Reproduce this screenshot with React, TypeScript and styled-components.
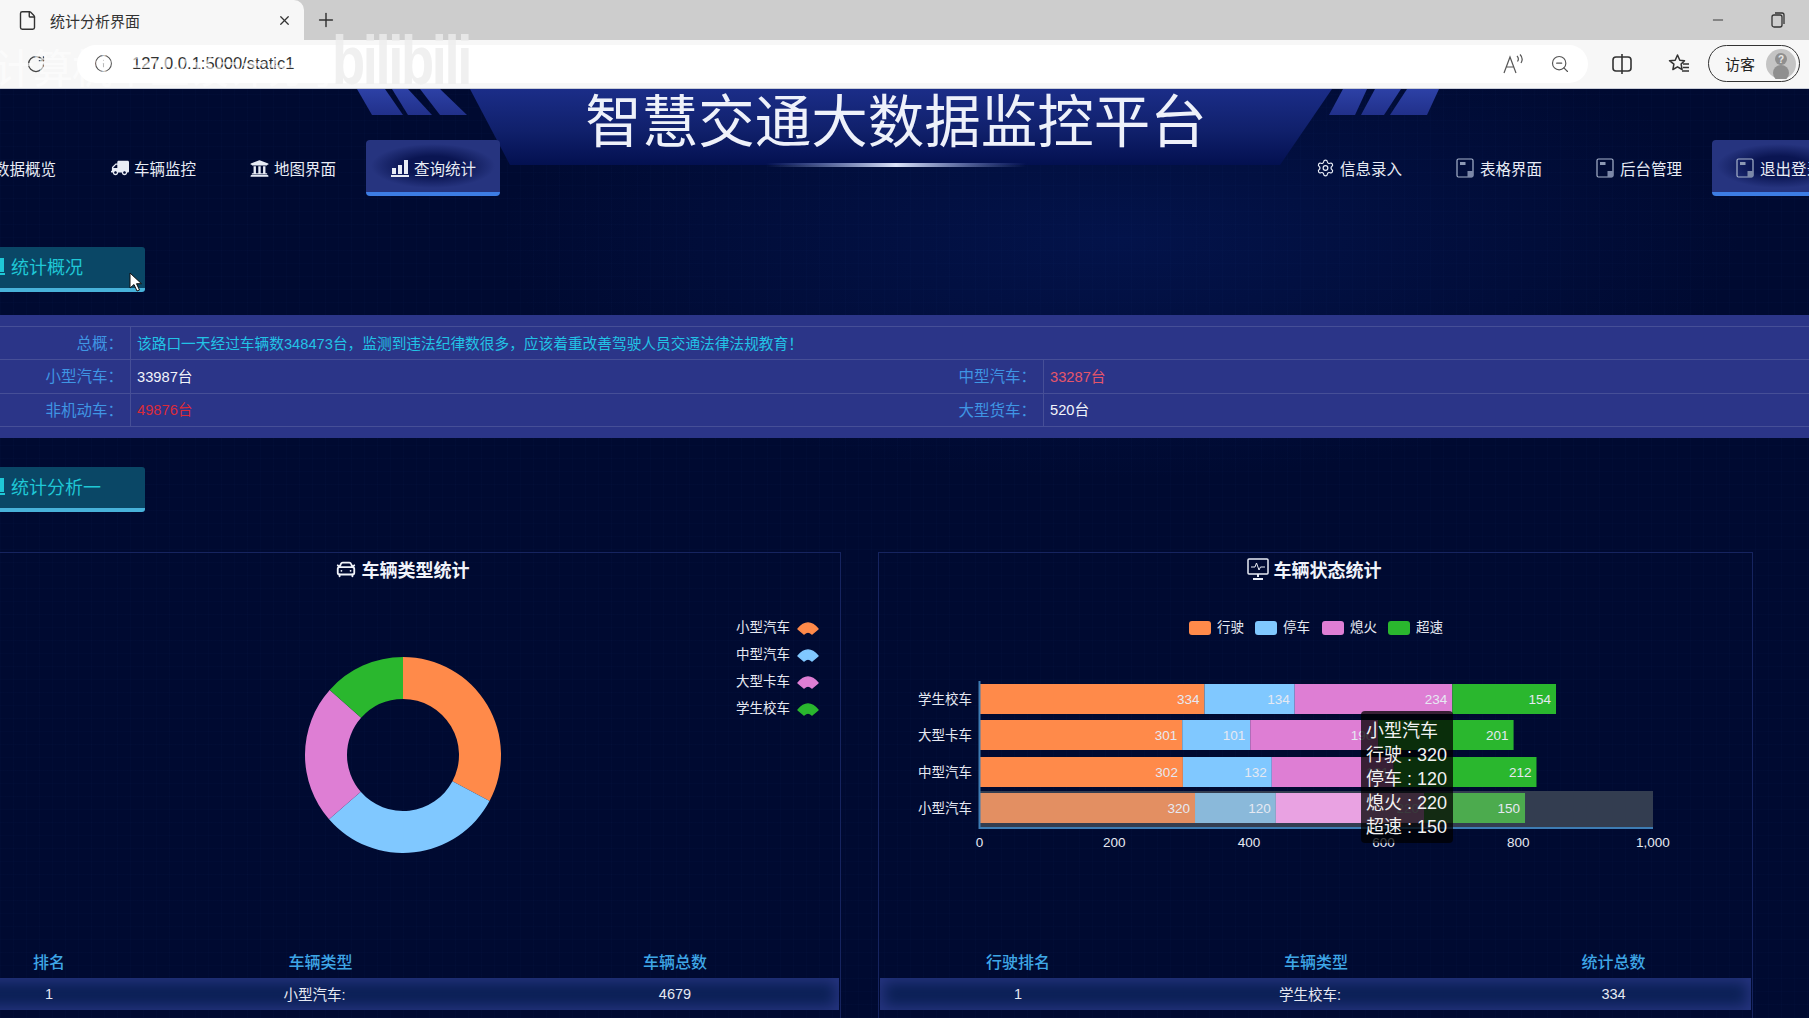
import React from "react";
import styled, { createGlobalStyle } from "styled-components";
import { CarFront, File, Info, Minus, Plus, RotateCw, Settings, X, ZoomOut } from "lucide-react";
import { FaTruck, FaUniversity } from "react-icons/fa";

const GlobalStyle = createGlobalStyle`
  html, body {
    margin: 0;
    padding: 0;
    overflow: hidden;
    background: #000b33;
  }
  * {
    box-sizing: border-box;
  }
  body {
    font-family: "Liberation Sans", "Noto Sans CJK SC", sans-serif;
  }
`;

const Window = styled.div`
  position: relative;
  width: 1809px;
  height: 1018px;
  overflow: hidden;
`;

const TabStrip = styled.div`
  display: flex;
  align-items: center;
  height: 40px;
  background: #cdcdcd;
  color: #333;
`;

const Tab = styled.div`
  display: flex;
  align-items: center;
  width: 304px;
  height: 40px;
  padding: 0 12px 0 17px;
  background: #f7f7f7;
  border-radius: 0 10px 0 0;
  font-size: 15px;
`;

const TabTitle = styled.span`
  flex: 1;
  margin-left: 12px;
`;

const NewTab = styled.div`
  display: flex;
  margin-left: 11px;
`;

const WindowControls = styled.div`
  display: flex;
  align-items: center;
  gap: 45px;
  margin-left: auto;
  padding-right: 24px;
`;

const Toolbar = styled.div`
  display: flex;
  align-items: center;
  height: 49px;
  padding: 0 9px 1px 26px;
  background: #f7f7f7;
  border-bottom: 1px solid #c9cdd8;
`;

const AddressBar = styled.div`
  display: flex;
  align-items: center;
  width: 1511px;
  height: 38px;
  margin-left: 31px;
  padding: 0 18px 0 17px;
  background: #fff;
  border-radius: 19px;
  color: #555;
`;

const Url = styled.span`
  margin-left: 19px;
  font-size: 16.5px;
  color: #333;
`;

const AddressTools = styled.div`
  display: flex;
  align-items: center;
  gap: 26px;
  margin-left: auto;
`;

const ToolbarIcons = styled.div`
  display: flex;
  align-items: center;
  gap: 36px;
  margin-left: 24px;
  color: #333;
`;

const GuestPill = styled.div`
  display: flex;
  align-items: center;
  justify-content: space-between;
  width: 92px;
  height: 37px;
  margin-left: auto;
  padding: 0 3px 0 16px;
  border: 1.5px solid #333;
  border-radius: 19px;
  font-size: 15px;
  color: #222;
`;

const Watermark = styled.div`
  position: absolute;
  left: 332px;
  top: 26px;
  font-size: 68px;
  line-height: 68px;
  font-weight: 700;
  letter-spacing: -3px;
  color: rgba(236, 236, 236, 0.8);
  transform: scaleX(0.8);
  transform-origin: left center;
  pointer-events: none;
`;

const GhostText = styled.div`
  position: absolute;
  left: -6px;
  top: 48px;
  font-size: 40px;
  line-height: 42px;
  letter-spacing: -1px;
  color: rgba(255, 255, 255, 0.62);
  pointer-events: none;
`;

const Page = styled.main`
  height: 929px;
  overflow: hidden;
  background-color: #000a31;
  background-image:
    repeating-linear-gradient(0deg, rgba(50, 100, 190, 0.025) 0 1px, transparent 1px 13px),
    repeating-linear-gradient(90deg, rgba(50, 100, 190, 0.025) 0 1px, transparent 1px 13px),
    radial-gradient(ellipse 620px 240px at 1120px 150px, #03134a, transparent);
`;

const Inner = styled.div`
  width: 1900px;
  margin-left: -54px;
`;

const Header = styled.header`
  position: relative;
  height: 107px;
`;

const HeaderArt = styled.svg`
  position: absolute;
  left: 0;
  top: 0;
`;

const Title = styled.h1`
  position: relative;
  height: 51px;
  margin: 0;
  font-size: 56.5px;
  line-height: 68px;
  font-weight: 400;
  text-align: center;
  color: #eef1fa;
`;

const Nav = styled.nav`
  position: relative;
  display: flex;
  justify-content: space-between;
  height: 56px;
`;

const NavGroup = styled.div`
  display: flex;
  gap: 6px;
`;

const NavItem = styled.a<{ $active?: boolean }>`
  display: flex;
  align-items: center;
  gap: 5px;
  width: 134px;
  height: 56px;
  padding-left: 24px;
  font-size: 15.5px;
  color: #e8ecf5;
  border-radius: 4px;
  ${(p) =>
    p.$active &&
    `
    padding-top: 4px;
    background: radial-gradient(ellipse 62px 22px at center, #0a1552 45%, #26347f 100%);
    border-bottom: 4px solid #3d7de4;
  `}
`;

const IconSlot = styled.span`
  display: flex;
  width: 19px;
  justify-content: center;
`;

const SectionBar = styled.div<{ $top: number }>`
  position: relative;
  display: flex;
  align-items: center;
  gap: 6px;
  width: 199px;
  height: 45px;
  margin-top: ${(p) => p.$top}px;
  padding: 0 0 3px 41px;
  background: #0a4766;
  border-bottom: 4px solid #48b2da;
  border-radius: 3px;
  font-size: 18px;
  color: #1fc8d6;
`;

const Pointer = styled.svg`
  position: absolute;
  left: 183px;
  top: 25px;
`;

const InfoPanel = styled.section`
  margin-top: 23px;
  padding: 11px 0;
  background: #2b3588;
`;

const InfoGrid = styled.div`
  display: grid;
  grid-template-columns: 184px 765px 148px 1fr;
  grid-auto-rows: 33.33px;
  border-bottom: 1px solid rgba(255, 255, 255, 0.13);
  font-size: 14.7px;
`;

const InfoLabel = styled.div`
  display: flex;
  align-items: center;
  justify-content: flex-end;
  padding: 0 7px 2px 0;
  border-top: 1px solid rgba(255, 255, 255, 0.13);
  font-size: 15.5px;
  color: #3f95e4;
`;

const InfoValue = styled.div<{ $tone: string; $wide?: boolean }>`
  display: flex;
  align-items: center;
  padding: 0 0 2px 6px;
  border-top: 1px solid rgba(255, 255, 255, 0.13);
  border-left: 1px solid rgba(255, 255, 255, 0.13);
  color: ${(p) => p.$tone};
  ${(p) => p.$wide && "grid-column: span 3;"}
`;

const Panels = styled.div`
  display: grid;
  grid-template-columns: 875px 875px;
  gap: 37px;
  margin: 40px 0 0 20px;
`;

const Panel = styled.section`
  height: 500px;
  border: 1px solid #16245f;
  border-bottom: none;
`;

const PanelTitle = styled.h2`
  display: flex;
  align-items: center;
  justify-content: center;
  gap: 5px;
  height: 37px;
  margin: 0;
  padding: 0 3px 5px 0;
  font-size: 18px;
  font-weight: 700;
  color: #f0f3fa;
`;

const ChartWrap = styled.div`
  position: relative;
  height: 355px;
`;

const ChartText = styled.text`
  font-size: 13.5px;
  fill: #e6e9f2;
`;

const Tooltip = styled.div`
  position: absolute;
  left: 482px;
  top: 121px;
  width: 92px;
  padding: 8px 0 4px 5px;
  background: rgba(0, 0, 0, 0.75);
  border-radius: 4px;
  font-size: 18px;
  line-height: 24px;
  color: #f2f2f2;
  white-space: nowrap;
`;

const TableHead = styled.div<{ $cols: string }>`
  display: grid;
  grid-template-columns: ${(p) => p.$cols};
  align-items: center;
  height: 33px;
  padding: 0 1px;
  font-size: 16px;
  font-weight: 500;
  text-align: center;
  color: #3ea6e6;
`;

const TableRow = styled.div<{ $cols: string }>`
  display: grid;
  grid-template-columns: ${(p) => p.$cols};
  align-items: center;
  height: 32px;
  margin: 0 1px;
  background: #0b2056;
  box-shadow: inset 0 0 14px 4px #26347f;
  font-size: 14.5px;
  text-align: center;
  color: #e6e9f2;
`;

const ORANGE = "#ff8a4a";
const BLUE = "#80c8ff";
const PINK = "#de7ed4";
const GREEN = "#2ab72e";
const SERIES = [ORANGE, BLUE, PINK, GREEN];
const FADED = ["#e38f62", "#8ab9da", "#e9a2e2", "#4cab4e"];

const polar = (cx: number, cy: number, r: number, deg: number) => {
  const a = ((deg - 90) * Math.PI) / 180;
  return [cx + r * Math.cos(a), cy + r * Math.sin(a)];
};

const ringSlice = (cx: number, cy: number, r0: number, r1: number, from: number, to: number) => {
  const [ax, ay] = polar(cx, cy, r1, from);
  const [bx, by] = polar(cx, cy, r1, to);
  const [ix, iy] = polar(cx, cy, r0, to);
  const [jx, jy] = polar(cx, cy, r0, from);
  const large = to - from > 180 ? 1 : 0;
  return `M${ax} ${ay}A${r1} ${r1} 0 ${large} 1 ${bx} ${by}L${ix} ${iy}A${r0} ${r0} 0 ${large} 0 ${jx} ${jy}Z`;
};

const DONUT = [
  { color: ORANGE, from: 0, to: 118 },
  { color: BLUE, from: 118, to: 229 },
  { color: PINK, from: 229, to: 311.6 },
  { color: GREEN, from: 311.6, to: 360 },
];

const DONUT_LEGEND = [
  { name: "小型汽车", color: ORANGE, y: 38 },
  { name: "中型汽车", color: BLUE, y: 65 },
  { name: "大型卡车", color: PINK, y: 92 },
  { name: "学生校车", color: GREEN, y: 119 },
];

const DonutChart = () => (
  <ChartWrap>
    <svg width="873" height="320">
      {DONUT.map((s) => (
        <path key={s.color} d={ringSlice(436, 165, 56, 98, s.from, s.to)} fill={s.color} />
      ))}
      {DONUT_LEGEND.map((l) => (
        <g key={l.name}>
          <ChartText x="769" y={l.y + 3.5}>
            {l.name}
          </ChartText>
          <path
            d={`M831 ${l.y + 1}Q841 ${l.y - 11} 851 ${l.y + 1}L845 ${l.y + 6}Q841 ${l.y + 2} 837 ${l.y + 6}Z`}
            fill={l.color}
            stroke={l.color}
            strokeWidth="1.5"
            strokeLinejoin="round"
          />
        </g>
      ))}
    </svg>
  </ChartWrap>
);

const BARS = [
  { name: "学生校车", y: 94, values: [334, 134, 234, 154] },
  { name: "大型卡车", y: 130, values: [301, 101, 190, 201] },
  { name: "中型汽车", y: 167, values: [302, 132, 181, 212] },
  { name: "小型汽车", y: 203, values: [320, 120, 220, 150], hover: true },
];

const STATE_LEGEND = [
  { name: "行驶", x: 310 },
  { name: "停车", x: 376 },
  { name: "熄火", x: 443 },
  { name: "超速", x: 509 },
];

const AXIS_X = 100.5;
const UNIT = 0.6735;

const BarChart = () => (
  <ChartWrap>
    <svg width="873" height="320">
      {STATE_LEGEND.map((l, i) => (
        <g key={l.name}>
          <rect x={l.x} y="31" width="22" height="14" rx="3" fill={SERIES[i]} />
          <ChartText x={l.x + 28} y="42">
            {l.name}
          </ChartText>
        </g>
      ))}
      <rect x={AXIS_X} y="201" width={1000 * UNIT} height="36" fill="#333d50" />
      {BARS.map((row) => {
        let acc = 0;
        return (
          <g key={row.name}>
            <ChartText x="93" y={row.y + 19.5} textAnchor="end">
              {row.name}
            </ChartText>
            {row.values.map((v, i) => {
              const x = AXIS_X + acc * UNIT;
              const w = v * UNIT;
              acc += v;
              return (
                <g key={i}>
                  <rect x={x} y={row.y} width={w} height="30" fill={row.hover ? FADED[i] : SERIES[i]} />
                  <ChartText x={x + w - 5} y={row.y + 19.5} textAnchor="end">
                    {v}
                  </ChartText>
                </g>
              );
            })}
          </g>
        );
      })}
      <path d={`M${AXIS_X} 91V238H${AXIS_X + 1000 * UNIT}`} fill="none" stroke="#3d7cb4" strokeWidth="2" />
      {[0, 200, 400, 600, 800, 1000].map((t) => (
        <ChartText key={t} x={AXIS_X + t * UNIT} y="257" textAnchor="middle">
          {t === 1000 ? "1,000" : t}
        </ChartText>
      ))}
    </svg>
    <Tooltip>
      小型汽车
      <br />
      行驶 : 320
      <br />
      停车 : 120
      <br />
      熄火 : 220
      <br />
      超速 : 150
    </Tooltip>
  </ChartWrap>
);

const BarsIcon = ({ size = 18 }: { size?: number }) => (
  <svg width={size} height={size} viewBox="0 0 18 18" fill="currentColor">
    <rect x="1" y="9" width="4" height="6" />
    <rect x="7" y="6" width="4" height="9" />
    <rect x="13" y="1" width="4" height="14" />
    <rect x="0" y="16" width="18" height="2" />
  </svg>
);

const PanelIcon = () => (
  <svg width="19" height="20" viewBox="0 0 19 20" fill="none">
    <rect x="1" y="1" width="16" height="18" rx="1.5" stroke="#a8b4cc" strokeWidth="1.2" />
    <rect x="4" y="4" width="5.500" height="3" fill="#8c98b4" />
    <rect x="11.500" y="13" width="5.500" height="6" fill="#7c88a8" />
  </svg>
);

const MonitorIcon = () => (
  <svg width="22" height="22" viewBox="0 0 22 22" fill="none" stroke="#e8ecf5" strokeWidth="1.5">
    <rect x="1" y="1" width="20" height="15" rx="1" />
    <path d="M4 9h4l1.5-4 2.5 7 1.5-3H18" strokeWidth="1" />
    <path d="M11 16v3M6 21h10" strokeWidth="2" />
  </svg>
);

const ReadAloudIcon = () => (
  <svg width="22" height="22" viewBox="0 0 22 22" fill="none" stroke="#555" strokeWidth="1.2">
    <path d="M2 20L8 4l6 16M4.500 14h7" />
    <path d="M15 3c1.500 1.500 1.500 4 .5 5.500M18 1.500c2.500 2.500 2.500 6 1 8.500" />
  </svg>
);

const SplitIcon = () => (
  <svg width="20" height="20" viewBox="0 0 20 20" fill="none" stroke="#333" strokeWidth="1.6">
    <rect x="1" y="3" width="18" height="14" rx="3" />
    <path d="M10 0v20" />
  </svg>
);

const FavoritesIcon = () => (
  <svg width="22" height="22" viewBox="0 0 22 22" fill="none" stroke="#333" strokeWidth="1.5">
    <path d="M9.500 2l2.300 5.200 4.700.5-3.400 3.400 1 5.400-4.600-2.700-4.600 2.700 1-5.400L1.500 7.700l5.700-.5z" strokeLinejoin="round" />
    <path d="M15 11h6M15 14.500h6M14 18h7" />
  </svg>
);

const RestoreIcon = () => (
  <svg width="14" height="16" viewBox="0 0 14 16" fill="none" stroke="#333" strokeWidth="1.3">
    <rect x="1" y="3" width="10" height="12" rx="2" />
    <path d="M4 1h7a2 2 0 0 1 2 2v9" />
  </svg>
);

const Avatar = () => (
  <svg width="30" height="30" viewBox="0 0 30 30">
    <circle cx="15" cy="15" r="15" fill="#c4c4c4" />
    <circle cx="15" cy="24" r="8" fill="#8f8f8f" />
    <circle cx="15" cy="10" r="6" fill="#8f8f8f" />
    <text x="15" y="14" fontSize="10" fontWeight="700" textAnchor="middle" fill="#e8e8e8">
      ?
    </text>
  </svg>
);

const HeaderBanner = () => (
  <HeaderArt width="1900" height="107" viewBox="0 0 1900 107">
    <defs>
      <linearGradient id="banner" x1="0" y1="0" x2="0" y2="1">
        <stop offset="0" stopColor="#1b2d88" />
        <stop offset="0.55" stopColor="#10206b" />
        <stop offset="1" stopColor="#031050" />
      </linearGradient>
      <linearGradient id="glow" x1="0" y1="0" x2="1" y2="0">
        <stop offset="0" stopColor="#8fa6f0" stopOpacity="0" />
        <stop offset="0.5" stopColor="#dbe3fa" />
        <stop offset="1" stopColor="#8fa6f0" stopOpacity="0" />
      </linearGradient>
      <linearGradient id="slash" x1="0" y1="0" x2="0" y2="1">
        <stop offset="0" stopColor="#2d41a6" />
        <stop offset="1" stopColor="#21308a" />
      </linearGradient>
    </defs>
    <path d="M524 0L564 76H1334L1386 0Z" fill="url(#banner)" />
    <rect x="820" y="74" width="260" height="4" fill="url(#glow)" />
    <g fill="url(#slash)">
      <path d="M411 0H439L457 26H426Z" />
      <path d="M446 0H462L486 26H462Z" />
      <path d="M474 0H494L521 26H494Z" />
      <path d="M1397 0H1421L1409 26H1383Z" />
      <path d="M1429 0H1455L1438 26H1415Z" />
      <path d="M1461 0H1493L1481 26H1444Z" />
    </g>
  </HeaderArt>
);

const LEFT_COLS = "162px 381px 1fr";
const RIGHT_COLS = "276px 320px 1fr";

const App: React.FC = () => (
  <Window>
    <GlobalStyle />
    <TabStrip>
      <Tab>
        <File size={21} strokeWidth={1.6} />
        <TabTitle>统计分析界面</TabTitle>
        <X size={15} />
      </Tab>
      <NewTab>
        <Plus size={22} strokeWidth={1.6} />
      </NewTab>
      <WindowControls>
        <Minus size={16} strokeWidth={1.4} />
        <RestoreIcon />
      </WindowControls>
    </TabStrip>
    <Toolbar>
      <RotateCw size={20} strokeWidth={1.5} color="#444" />
      <AddressBar>
        <Info size={19} strokeWidth={1.3} />
        <Url>127.0.0.1:5000/static1</Url>
        <AddressTools>
          <ReadAloudIcon />
          <ZoomOut size={20} strokeWidth={1.4} />
        </AddressTools>
      </AddressBar>
      <ToolbarIcons>
        <SplitIcon />
        <FavoritesIcon />
      </ToolbarIcons>
      <GuestPill>
        访客
        <Avatar />
      </GuestPill>
    </Toolbar>
    <Page>
      <Inner>
        <Header>
          <HeaderBanner />
          <Title>智慧交通大数据监控平台</Title>
          <Nav>
            <NavGroup>
              <NavItem>
                <IconSlot>
                  <BarsIcon />
                </IconSlot>
                数据概览
              </NavItem>
              <NavItem>
                <IconSlot>
                  <FaTruck size={18} style={{ transform: "scaleX(-1)" }} />
                </IconSlot>
                车辆监控
              </NavItem>
              <NavItem>
                <IconSlot>
                  <FaUniversity size={19} />
                </IconSlot>
                地图界面
              </NavItem>
              <NavItem $active>
                <IconSlot>
                  <BarsIcon />
                </IconSlot>
                查询统计
              </NavItem>
            </NavGroup>
            <NavGroup>
              <NavItem>
                <IconSlot>
                  <Settings size={20} strokeWidth={1.5} />
                </IconSlot>
                信息录入
              </NavItem>
              <NavItem>
                <IconSlot>
                  <PanelIcon />
                </IconSlot>
                表格界面
              </NavItem>
              <NavItem>
                <IconSlot>
                  <PanelIcon />
                </IconSlot>
                后台管理
              </NavItem>
              <NavItem $active>
                <IconSlot>
                  <PanelIcon />
                </IconSlot>
                退出登录
              </NavItem>
            </NavGroup>
          </Nav>
        </Header>
        <SectionBar $top={51}>
          <BarsIcon />
          统计概况
          <Pointer width="14" height="20" viewBox="0 0 14 20">
            <path d="M1 1v15l4-3.500 3 6.500 2.500-1-3-6.300h5z" fill="#fff" stroke="#111" strokeWidth="1" />
          </Pointer>
        </SectionBar>
        <InfoPanel>
          <InfoGrid>
            <InfoLabel>总概：</InfoLabel>
            <InfoValue $tone="#22c3e6" $wide>
              该路口一天经过车辆数348473台，监测到违法纪律数很多，应该着重改善驾驶人员交通法律法规教育！
            </InfoValue>
            <InfoLabel>小型汽车：</InfoLabel>
            <InfoValue $tone="#f2f4fa">33987台</InfoValue>
            <InfoLabel>中型汽车：</InfoLabel>
            <InfoValue $tone="#e6556a">33287台</InfoValue>
            <InfoLabel>非机动车：</InfoLabel>
            <InfoValue $tone="#d92b3a">49876台</InfoValue>
            <InfoLabel>大型货车：</InfoLabel>
            <InfoValue $tone="#f2f4fa">520台</InfoValue>
          </InfoGrid>
        </InfoPanel>
        <SectionBar $top={29}>
          <BarsIcon />
          统计分析一
        </SectionBar>
        <Panels>
          <Panel>
            <PanelTitle>
              <CarFront size={22} />
              车辆类型统计
            </PanelTitle>
            <DonutChart />
            <TableHead $cols={LEFT_COLS}>
              <span>排名</span>
              <span>车辆类型</span>
              <span>车辆总数</span>
            </TableHead>
            <TableRow $cols={LEFT_COLS}>
              <span>1</span>
              <span>小型汽车:&nbsp;&nbsp;&nbsp;</span>
              <span>4679</span>
            </TableRow>
          </Panel>
          <Panel>
            <PanelTitle>
              <MonitorIcon />
              车辆状态统计
            </PanelTitle>
            <BarChart />
            <TableHead $cols={RIGHT_COLS}>
              <span>行驶排名</span>
              <span>车辆类型</span>
              <span>统计总数</span>
            </TableHead>
            <TableRow $cols={RIGHT_COLS}>
              <span>1</span>
              <span>学生校车:&nbsp;&nbsp;&nbsp;</span>
              <span>334</span>
            </TableRow>
          </Panel>
        </Panels>
      </Inner>
    </Page>
    <GhostText>计算机毕业设计分享</GhostText>
    <Watermark>bilibili</Watermark>
  </Window>
);

export default App;
